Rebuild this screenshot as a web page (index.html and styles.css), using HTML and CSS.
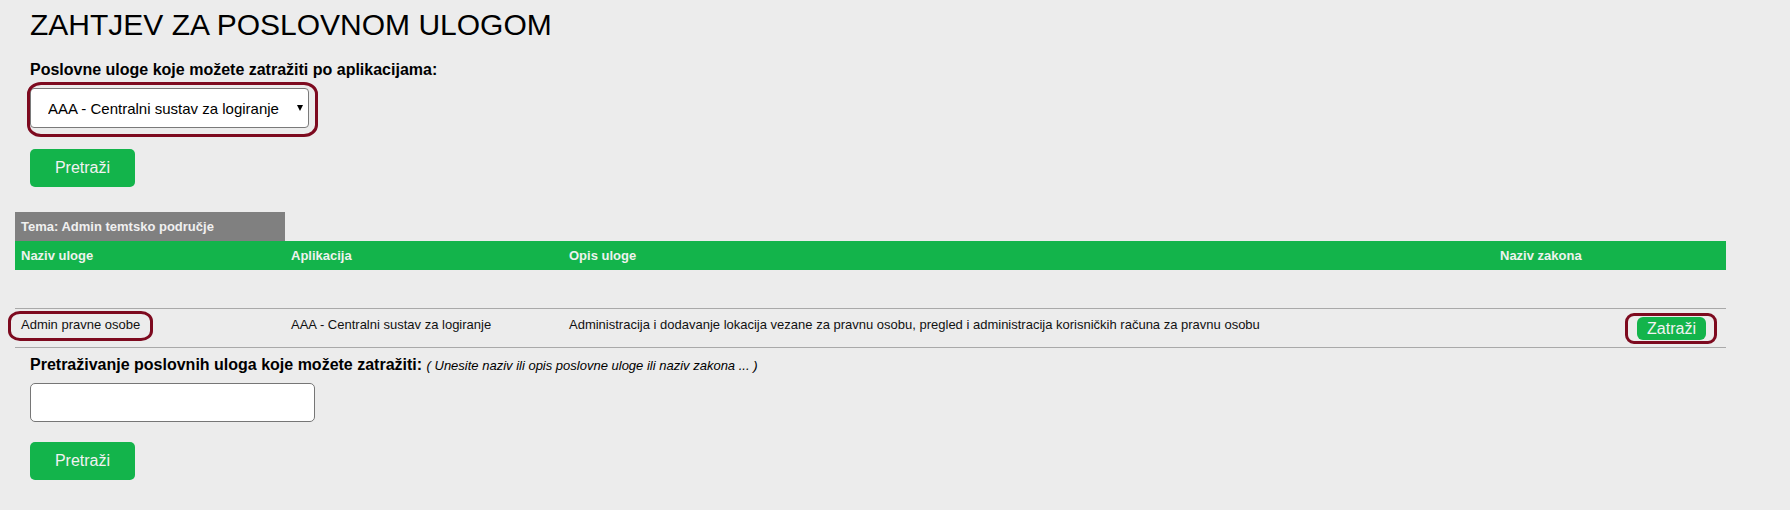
FILE: index.html
```html
<!DOCTYPE html>
<html>
<head>
    <title>Zahtjev za poslovnom ulogom</title>
    <link rel="stylesheet" href="styles.css">
</head>
<body>
<div class="page">
    <div class="form-block">
        <h1 class="title">ZAHTJEV ZA POSLOVNOM ULOGOM</h1>

        <div class="field-label">Poslovne uloge koje možete zatražiti po aplikacijama:</div>
        <div class="select-wrap">
            <select class="app-select">
                <option>AAA - Centralni sustav za logiranje</option>
            </select>
            <span class="mark mark-select"></span>
        </div>

        <button class="btn">Pretraži</button>
    </div>

    <div class="theme">Tema: Admin temtsko područje</div>
    <table class="roles">
        <thead>
            <tr>
                <th class="col-name">Naziv uloge</th>
                <th class="col-app">Aplikacija</th>
                <th class="col-desc">Opis uloge</th>
                <th class="col-law">Naziv zakona</th>
            </tr>
        </thead>
        <tbody>
            <tr class="empty-row">
                <td colspan="4"></td>
            </tr>
            <tr class="data-row">
                <td><span class="marked">Admin pravne osobe<span class="mark mark-name"></span></span></td>
                <td>AAA - Centralni sustav za logiranje</td>
                <td>Administracija i dodavanje lokacija vezane za pravnu osobu, pregled i administracija korisničkih računa za pravnu osobu</td>
                <td class="cell-action">
                    <span class="marked">
                        <button class="btn-small">Zatraži</button>
                        <span class="mark mark-btn"></span>
                    </span>
                </td>
            </tr>
        </tbody>
    </table>

    <div class="form-block">
        <div class="search-label">Pretraživanje poslovnih uloga koje možete zatražiti: <span class="hint">( Unesite naziv ili opis poslovne uloge ili naziv zakona ... )</span></div>
        <input class="search-input" type="text">
        <button class="btn">Pretraži</button>
    </div>
</div>
</body>
</html>
```

FILE: styles.css
```css
body {
    margin: 0;
    background-color: #ececec;
    font-family: "Liberation Sans", Arial, sans-serif;
    color: #000;
}

.page {
    padding: 8px 15px 0 15px;
}

.form-block {
    padding-left: 15px;
}

.title {
    margin: 0 0 19px 0;
    font-size: 30px;
    font-weight: normal;
    line-height: 34px;
}

.field-label {
    font-size: 16px;
    font-weight: bold;
    line-height: 18px;
    margin-bottom: 9px;
}

.select-wrap {
    position: relative;
    width: 279px;
    height: 40px;
}

.app-select {
    -webkit-appearance: none;
    appearance: none;
    width: 100%;
    height: 40px;
    box-sizing: border-box;
    border: 1px solid #7a7a7a;
    border-radius: 4px;
    background-color: #fff;
    font-family: "Liberation Sans", Arial, sans-serif;
    font-size: 15px;
    color: #000;
    padding: 0 0 0 17px;
}

.select-wrap::after {
    content: "";
    position: absolute;
    right: 6px;
    top: 50%;
    margin-top: -3px;
    border-left: 3px solid transparent;
    border-right: 3px solid transparent;
    border-top: 6px solid #000;
}

/* rucno nacrtane oznake */
.mark {
    position: absolute;
    border: 3px solid #7d0a1f;
    pointer-events: none;
}

.mark-select {
    left: -3px;
    right: -9px;
    top: -6px;
    bottom: -9px;
    border-radius: 14px / 12px;
}

.mark-name {
    left: -13px;
    right: -13px;
    top: -6px;
    bottom: -9px;
    border-radius: 12px / 10px;
}

.mark-btn {
    left: -12px;
    right: -11px;
    top: -4px;
    bottom: -4px;
    border-radius: 9px;
}

.marked {
    position: relative;
    display: inline-block;
}

.btn {
    display: block;
    width: 105px;
    height: 38px;
    margin-top: 21px;
    border: none;
    border-radius: 5px;
    background-color: #13b44b;
    color: #f2f2f2;
    font-family: "Liberation Sans", Arial, sans-serif;
    font-size: 16px;
    cursor: pointer;
}

.theme {
    width: 270px;
    height: 29px;
    margin-top: 25px;
    box-sizing: border-box;
    padding-left: 6px;
    background-color: #808080;
    color: #f0f0f0;
    font-size: 13px;
    font-weight: bold;
    line-height: 29px;
}

.roles {
    width: 1711px;
    border-collapse: collapse;
    table-layout: fixed;
    font-size: 13px;
}

.roles th {
    height: 29px;
    padding: 0 6px;
    background-color: #13b44b;
    color: #eef2ee;
    text-align: left;
    font-weight: bold;
    line-height: 15px;
}

/* sirine bez paddinga od 6px s obje strane */
.col-name { width: 258px; }
.col-app { width: 266px; }
.col-desc { width: 919px; }
.col-law { width: 220px; }

.empty-row td {
    height: 38px;
    padding: 0;
    border-bottom: 1px solid #a9a9a9;
}

.data-row td {
    height: 39px;
    box-sizing: border-box;
    padding: 8px 6px 0 6px;
    vertical-align: top;
    line-height: 15px;
    border-bottom: 1px solid #a9a9a9;
    color: #111;
}

.data-row .cell-action {
    text-align: right;
    padding-right: 20px;
}

.btn-small {
    height: 23px;
    padding: 0 10px;
    border: none;
    border-radius: 6px;
    background-color: #13b44b;
    color: #f2f2f2;
    font-family: "Liberation Sans", Arial, sans-serif;
    font-size: 16px;
    line-height: 23px;
    vertical-align: top;
}

.search-label {
    margin-top: 8px;
    font-size: 16px;
    font-weight: bold;
    line-height: 18px;
}

.hint {
    font-size: 13px;
    font-weight: normal;
    font-style: italic;
}

.search-input {
    display: block;
    width: 285px;
    height: 39px;
    box-sizing: border-box;
    margin-top: 8px;
    border: 1px solid #767676;
    border-radius: 5px;
    background-color: #fff;
}

.search-input + .btn {
    margin-top: 20px;
}
```
